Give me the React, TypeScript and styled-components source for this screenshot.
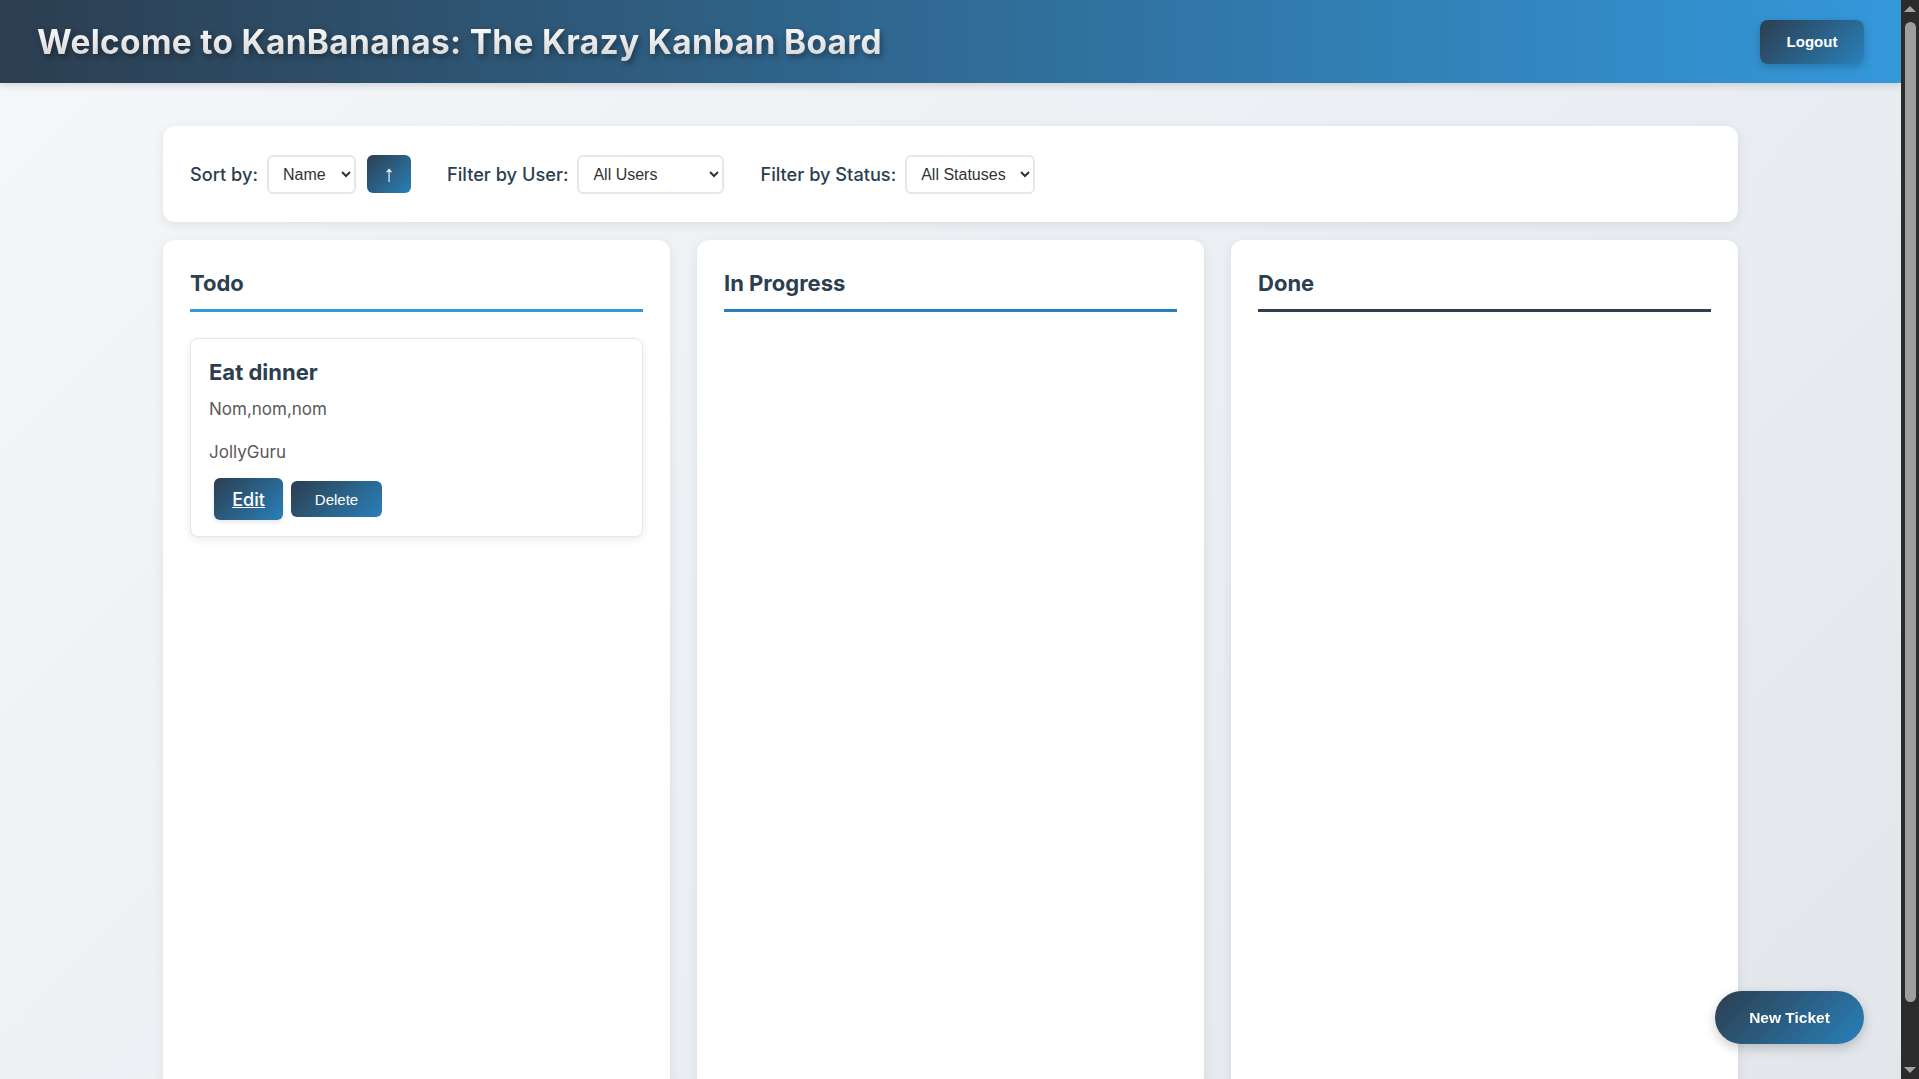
import React from "react";
import styled, { createGlobalStyle } from "styled-components";

const GlobalStyle = createGlobalStyle`
  body {
    margin: 0;
    padding-right: 18px;
    min-height: 100vh;
    background: linear-gradient(135deg, #f5f7fa 0%, #e2e6eb 100%);
    font-family: Inter, "Noto Sans", sans-serif;
    color: #2c3e50;
  }
`;

const Header = styled.header`
  height: 83px;
  display: flex;
  align-items: center;
  justify-content: space-between;
  padding: 0 37px 0 37px;
  background: linear-gradient(90deg, #2c3e50 0%, #3498db 100%);
  box-shadow: 0 2px 8px rgba(0, 0, 0, 0.15);
`;

const Title = styled.h1`
  margin: 0;
  font-family: Inter, "Noto Sans", sans-serif;
  font-size: 33.5px;
  font-weight: 700;
  letter-spacing: 0.3px;
  background: linear-gradient(180deg, #ffffff 0%, #d2d2d2 100%);
  -webkit-background-clip: text;
  background-clip: text;
  color: transparent;
  filter: drop-shadow(2px 3px 3px rgba(0, 0, 0, 0.4));
`;

const GradientButton = styled.button`
  border: none;
  color: #ffffff;
  cursor: pointer;
  background: linear-gradient(135deg, #2c3e50 0%, #2980b9 100%);
  font-family: "Liberation Sans", Arial, sans-serif;
`;

const LogoutButton = styled(GradientButton)`
  width: 104px;
  height: 44px;
  border-radius: 8px;
  font-size: 15px;
  font-weight: 700;
  box-shadow: 0 3px 8px rgba(0, 0, 0, 0.2);
`;

const Main = styled.main`
  width: 1575px;
  margin: 43px auto 0;
  padding-bottom: 30px;
  display: flex;
  flex-direction: column;
  gap: 18px;
`;

const FilterBar = styled.section`
  height: 96px;
  box-sizing: border-box;
  padding: 0 27px;
  display: flex;
  align-items: center;
  gap: 36px;
  background: #ffffff;
  border-radius: 12px;
  box-shadow: 0 3px 12px rgba(0, 0, 0, 0.08);
`;

const Group = styled.div`
  display: flex;
  align-items: center;
  gap: 9px;
`;

const Label = styled.label`
  font-size: 18.2px;
  font-weight: 500;
  color: #2c3e50;
`;

const Select = styled.select<{ $w: number }>`
  width: ${(p) => p.$w}px;
  height: 39px;
  padding: 0 8px 0 10px;
  border: 2px solid #e4e8ec;
  border-radius: 6px;
  background: #ffffff;
  color: #333;
  font-family: "Liberation Sans", Arial, sans-serif;
  font-size: 16px;
`;

const SortButton = styled(GradientButton)`
  width: 44px;
  height: 38px;
  margin-left: 2px;
  border-radius: 6px;
  font-size: 22px;
  font-weight: 300;
  padding: 0;
`;

const Board = styled.div`
  display: grid;
  grid-template-columns: repeat(3, 1fr);
  gap: 27px;
`;

const Column = styled.section`
  min-height: 880px;
  box-sizing: border-box;
  padding: 27px;
  background: #ffffff;
  border-radius: 12px;
  box-shadow: 0 3px 12px rgba(0, 0, 0, 0.08);
`;

const ColumnTitle = styled.h2<{ $line: string }>`
  margin: 0 0 26px;
  padding-bottom: 10px;
  font-size: 22px;
  line-height: 32px;
  font-weight: 700;
  color: #2c3e50;
  border-bottom: 3px solid ${(p) => p.$line};
`;

const Card = styled.article`
  padding: 19px 18px 16px;
  border: 1px solid #e4e6e9;
  border-radius: 8px;
  background: #ffffff;
  box-shadow: 0 3px 8px rgba(0, 0, 0, 0.08);
`;

const CardTitle = styled.h3`
  margin: 0;
  font-size: 22px;
  line-height: 28px;
  font-weight: 700;
  color: #2c3e50;
`;

const CardText = styled.p<{ $gap: number }>`
  margin: ${(p) => p.$gap}px 0 0;
  font-size: 17px;
  line-height: 24px;
  color: #5a5a5a;
`;

const Actions = styled.div`
  display: flex;
  align-items: center;
  gap: 8px;
  margin-top: 14px;
  padding-left: 5px;
`;

const EditButton = styled(GradientButton)`
  width: 69px;
  height: 42px;
  border-radius: 6px;
  font-family: Inter, "Noto Sans", sans-serif;
  font-size: 18px;
  font-weight: 500;
  text-decoration: underline;
  box-shadow: 0 2px 4px rgba(0, 0, 0, 0.1);
`;

const DeleteButton = styled(GradientButton)`
  width: 91px;
  height: 36px;
  border-radius: 6px;
  font-size: 15px;
`;

const NewTicketButton = styled(GradientButton)`
  position: fixed;
  right: 55px;
  bottom: 35px;
  width: 149px;
  height: 53px;
  border-radius: 27px;
  font-size: 15.5px;
  font-weight: 700;
  box-shadow: 0 4px 12px rgba(0, 0, 0, 0.2);
`;

/* Browser-style vertical scrollbar shown in the reference */
const ScrollTrack = styled.div`
  position: fixed;
  top: 0;
  right: 0;
  bottom: 0;
  width: 18px;
  background: #2b2b2b;
  display: flex;
  flex-direction: column;
  align-items: center;
`;

const Arrow = styled.div<{ $down?: boolean }>`
  flex: 0 0 auto;
  margin: ${(p) => (p.$down ? "4px 0 6px" : "6px 0 4px")};
  width: 0;
  height: 0;
  border-left: 6px solid transparent;
  border-right: 6px solid transparent;
  ${(p) =>
    p.$down
      ? "border-top: 6px solid #a3a3a3;"
      : "border-bottom: 6px solid #a3a3a3;"}
`;

const Thumb = styled.div`
  width: 11px;
  height: 980px;
  margin-top: 6px;
  border-radius: 6px;
  background: #9e9e9e;
`;

const Spacer = styled.div`
  flex: 1;
`;

const columns = [
  { name: "Todo", line: "#3498db" },
  { name: "In Progress", line: "#2980b9" },
  { name: "Done", line: "#2c3e50" },
];

export default function App() {
  return (
    <>
      <GlobalStyle />
      <Header>
        <Title>Welcome to KanBananas: The Krazy Kanban Board</Title>
        <LogoutButton>Logout</LogoutButton>
      </Header>
      <Main>
        <FilterBar>
          <Group>
            <Label>Sort by:</Label>
            <Select $w={89} defaultValue="name">
              <option value="name">Name</option>
            </Select>
            <SortButton>↑</SortButton>
          </Group>
          <Group>
            <Label>Filter by User:</Label>
            <Select $w={147} defaultValue="all">
              <option value="all">All Users</option>
            </Select>
          </Group>
          <Group>
            <Label>Filter by Status:</Label>
            <Select $w={130} defaultValue="all">
              <option value="all">All Statuses</option>
            </Select>
          </Group>
        </FilterBar>
        <Board>
          {columns.map((c) => (
            <Column key={c.name}>
              <ColumnTitle $line={c.line}>{c.name}</ColumnTitle>
              {c.name === "Todo" && (
                <Card>
                  <CardTitle>Eat dinner</CardTitle>
                  <CardText $gap={11}>Nom,nom,nom</CardText>
                  <CardText $gap={19}>JollyGuru</CardText>
                  <Actions>
                    <EditButton>Edit</EditButton>
                    <DeleteButton>Delete</DeleteButton>
                  </Actions>
                </Card>
              )}
            </Column>
          ))}
        </Board>
      </Main>
      <NewTicketButton>New Ticket</NewTicketButton>
      <ScrollTrack aria-hidden>
        <Arrow />
        <Thumb />
        <Spacer />
        <Arrow $down />
      </ScrollTrack>
    </>
  );
}
